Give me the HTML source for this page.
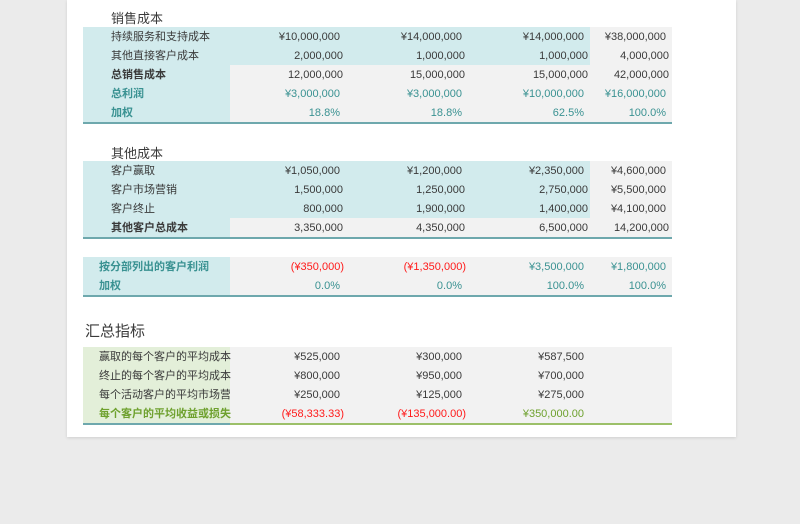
<!DOCTYPE html>
<html><head><meta charset="utf-8">
<style>
body{margin:0;width:800px;height:524px;background:#ebebeb;position:relative;overflow:hidden;font-family:"Liberation Sans","Noto Sans CJK SC",sans-serif;font-size:11px;color:#3a3a3a}
.sheet{position:absolute;left:67px;top:0;width:669px;height:437px;background:#fff;box-shadow:0 1px 3px rgba(0,0,0,.12)}
.b{position:absolute;height:19px}
.t{position:absolute;line-height:19px;white-space:nowrap;margin-top:1px}
.r{position:absolute;line-height:19px;text-align:right;white-space:nowrap;margin-top:1px}
.tl{background:#d2ebed}.gr{background:#f2f2f2}.gn{background:#e3efd9}
.teal{color:#3a9292}.red{color:#ff1a1a}.grn{color:#6ea12e}
.bold{font-weight:bold}
.line{position:absolute;height:2px}
</style></head><body>
<div class="sheet"></div>

<div class="t" style="left:111px;top:8px;font-size:13px">销售成本</div>
<div class="b tl" style="left:83px;top:27px;width:507px;height:38px"></div>
<div class="b gr" style="left:590px;top:27px;width:82px;height:38px"></div>
<div class="b tl" style="left:83px;top:65px;width:147px;height:57px"></div>
<div class="b gr" style="left:230px;top:65px;width:442px;height:57px"></div>
<div class="line" style="left:83px;top:122px;width:589px;background:#6ea8ad"></div>

<div class="t" style="left:111px;top:27px">持续服务和支持成本</div>
<div class="t" style="left:111px;top:46px">其他直接客户成本</div>
<div class="t bold" style="left:111px;top:65px">总销售成本</div>
<div class="t bold teal" style="left:111px;top:84px">总利润</div>
<div class="t bold teal" style="left:111px;top:103px">加权</div>

<div class="r" style="right:460px;top:27px">¥10,000,000</div>
<div class="r" style="right:338px;top:27px">¥14,000,000</div>
<div class="r" style="right:216px;top:27px">¥14,000,000</div>
<div class="r" style="right:134px;top:27px">¥38,000,000</div>
<div class="r" style="right:457px;top:46px">2,000,000</div>
<div class="r" style="right:335px;top:46px">1,000,000</div>
<div class="r" style="right:212px;top:46px">1,000,000</div>
<div class="r" style="right:131px;top:46px">4,000,000</div>
<div class="r" style="right:457px;top:65px">12,000,000</div>
<div class="r" style="right:335px;top:65px">15,000,000</div>
<div class="r" style="right:212px;top:65px">15,000,000</div>
<div class="r" style="right:131px;top:65px">42,000,000</div>
<div class="r teal" style="right:460px;top:84px">¥3,000,000</div>
<div class="r teal" style="right:338px;top:84px">¥3,000,000</div>
<div class="r teal" style="right:216px;top:84px">¥10,000,000</div>
<div class="r teal" style="right:134px;top:84px">¥16,000,000</div>
<div class="r teal" style="right:460px;top:103px">18.8%</div>
<div class="r teal" style="right:338px;top:103px">18.8%</div>
<div class="r teal" style="right:216px;top:103px">62.5%</div>
<div class="r teal" style="right:134px;top:103px">100.0%</div>

<div class="t" style="left:111px;top:143px;font-size:13px">其他成本</div>
<div class="b tl" style="left:83px;top:161px;width:507px;height:57px"></div>
<div class="b gr" style="left:590px;top:161px;width:82px;height:57px"></div>
<div class="b tl" style="left:83px;top:218px;width:147px;height:19px"></div>
<div class="b gr" style="left:230px;top:218px;width:442px;height:19px"></div>
<div class="line" style="left:83px;top:237px;width:589px;background:#6ea8ad"></div>

<div class="t" style="left:111px;top:161px">客户赢取</div>
<div class="t" style="left:111px;top:180px">客户市场营销</div>
<div class="t" style="left:111px;top:199px">客户终止</div>
<div class="t bold" style="left:111px;top:218px">其他客户总成本</div>

<div class="r" style="right:460px;top:161px">¥1,050,000</div>
<div class="r" style="right:338px;top:161px">¥1,200,000</div>
<div class="r" style="right:216px;top:161px">¥2,350,000</div>
<div class="r" style="right:134px;top:161px">¥4,600,000</div>
<div class="r" style="right:457px;top:180px">1,500,000</div>
<div class="r" style="right:335px;top:180px">1,250,000</div>
<div class="r" style="right:212px;top:180px">2,750,000</div>
<div class="r" style="right:134px;top:180px">¥5,500,000</div>
<div class="r" style="right:457px;top:199px">800,000</div>
<div class="r" style="right:335px;top:199px">1,900,000</div>
<div class="r" style="right:212px;top:199px">1,400,000</div>
<div class="r" style="right:134px;top:199px">¥4,100,000</div>
<div class="r" style="right:457px;top:218px">3,350,000</div>
<div class="r" style="right:335px;top:218px">4,350,000</div>
<div class="r" style="right:212px;top:218px">6,500,000</div>
<div class="r" style="right:131px;top:218px">14,200,000</div>

<div class="b tl" style="left:83px;top:257px;width:147px;height:38px"></div>
<div class="b gr" style="left:230px;top:257px;width:442px;height:38px"></div>
<div class="line" style="left:83px;top:295px;width:589px;background:#6ea8ad"></div>
<div class="t bold teal" style="left:99px;top:257px">按分部列出的客户利润</div>
<div class="t bold teal" style="left:99px;top:276px">加权</div>
<div class="r red" style="right:456px;top:257px">(¥350,000)</div>
<div class="r red" style="right:334px;top:257px">(¥1,350,000)</div>
<div class="r teal" style="right:216px;top:257px">¥3,500,000</div>
<div class="r teal" style="right:134px;top:257px">¥1,800,000</div>
<div class="r teal" style="right:460px;top:276px">0.0%</div>
<div class="r teal" style="right:338px;top:276px">0.0%</div>
<div class="r teal" style="right:216px;top:276px">100.0%</div>
<div class="r teal" style="right:134px;top:276px">100.0%</div>

<div class="t" style="left:85px;top:321px;font-size:15px">汇总指标</div>
<div class="b gn" style="left:83px;top:347px;width:147px;height:76px"></div>
<div class="b gr" style="left:230px;top:347px;width:442px;height:76px"></div>
<div class="line" style="left:83px;top:423px;width:147px;background:#6ea8ad"></div>
<div class="line" style="left:230px;top:423px;width:442px;background:#9cc069"></div>
<div class="t" style="left:99px;top:347px">赢取的每个客户的平均成本</div>
<div class="t" style="left:99px;top:366px">终止的每个客户的平均成本</div>
<div class="t" style="left:99px;top:385px;width:131px;overflow:hidden">每个活动客户的平均市场营销</div>
<div class="t bold grn" style="left:99px;top:404px">每个客户的平均收益或损失</div>
<div class="r" style="right:460px;top:347px">¥525,000</div>
<div class="r" style="right:338px;top:347px">¥300,000</div>
<div class="r" style="right:216px;top:347px">¥587,500</div>
<div class="r" style="right:460px;top:366px">¥800,000</div>
<div class="r" style="right:338px;top:366px">¥950,000</div>
<div class="r" style="right:216px;top:366px">¥700,000</div>
<div class="r" style="right:460px;top:385px">¥250,000</div>
<div class="r" style="right:338px;top:385px">¥125,000</div>
<div class="r" style="right:216px;top:385px">¥275,000</div>
<div class="r red" style="right:456px;top:404px">(¥58,333.33)</div>
<div class="r red" style="right:334px;top:404px">(¥135,000.00)</div>
<div class="r grn" style="right:216px;top:404px">¥350,000.00</div>
</body></html>
